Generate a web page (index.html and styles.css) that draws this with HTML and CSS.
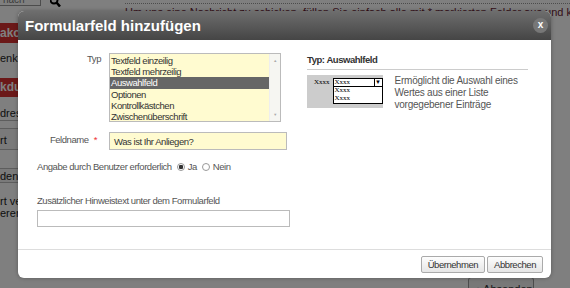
FILE: index.html
```html
<!DOCTYPE html>
<html lang="de">
<head>
    <meta charset="UTF-8">
    <title>Formularfeld hinzufügen</title>
    <link rel="stylesheet" href="styles.css">
</head>
<body>
    <!-- page behind the dialog -->
    <div class="page">
        <div class="page-top">
            <div class="search">
                <div class="search-input">nach</div>
                <svg class="search-icon" width="12" height="7" viewBox="0 0 12 7"><circle cx="4" cy="0" r="3.5" fill="none" stroke="#000" stroke-width="2"/><path d="M6.5 2.5 L10 6.5" stroke="#000" stroke-width="2.5"/></svg>
            </div>
            <div class="intro">Um uns eine Nachricht zu schicken, füllen Sie einfach alle mit * markierten Felder aus und klicken Sie auf "Abschicken"</div>
        </div>
        <div class="sidebar">
            <div class="side-head">akor</div>
            <div class="side-text">enkor</div>
            <div class="side-head side-head-2">kdun</div>
            <div class="side-text side-line">dres</div>
            <div class="side-box">rt</div>
            <div class="side-box side-box-2">den</div>
            <div class="side-note">rt ver<br>eren</div>
        </div>
        <div class="page-btn">› Absenden</div>
    </div>

    <div class="overlay"></div>

    <div class="dialog">
        <div class="dialog-title">
            <span>Formularfeld hinzufügen</span>
            <span class="close">x</span>
        </div>
        <div class="dialog-body">
            <div class="form">
                <div class="row">
                    <label class="label">Typ</label>
                    <div class="listbox">
                        <div class="list-items">
                            <div class="item">Textfeld einzeilig</div>
                            <div class="item">Textfeld mehrzeilig</div>
                            <div class="item selected">Auswahlfeld</div>
                            <div class="item">Optionen</div>
                            <div class="item">Kontrollkästchen</div>
                            <div class="item">Zwischenüberschrift</div>
                        </div>
                        <div class="scrollbar">
                            <span class="arrow">▲</span>
                            <span class="arrow">▼</span>
                        </div>
                    </div>
                </div>
                <div class="row row-name">
                    <label class="label">Feldname <span class="req">*</span></label>
                    <div class="text-input yellow">Was ist Ihr Anliegen?</div>
                </div>
                <div class="required-row">
                    Angabe durch Benutzer erforderlich
                    <span class="radio checked"></span> Ja
                    <span class="radio"></span> Nein
                </div>
                <div class="hint">
                    <div class="hint-label">Zusätzlicher Hinweistext unter dem Formularfeld</div>
                    <div class="text-input wide"></div>
                </div>
            </div>

            <div class="info">
                <h4 class="info-title">Typ: Auswahlfeld</h4>
                <div class="info-row">
                    <div class="preview">
                        <span class="preview-label">Xxxx</span>
                        <div class="preview-select">
                            <div class="preview-current">Xxxx<span class="preview-arrow">▼</span></div>
                            <div class="preview-option">Xxxx</div>
                            <div class="preview-option">Xxxx</div>
                        </div>
                    </div>
                    <p class="info-text">Ermöglicht die Auswahl eines Wertes aus einer Liste vorgegebener Einträge</p>
                </div>
            </div>
        </div>
        <div class="dialog-footer">
            <button class="btn">Übernehmen</button>
            <button class="btn">Abbrechen</button>
        </div>
    </div>
</body>
</html>
```

FILE: styles.css
```css
* {
    margin: 0;
    padding: 0;
    box-sizing: border-box;
}

body {
    font-family: "Liberation Sans", Arial, sans-serif;
    width: 570px;
    height: 288px;
    overflow: hidden;
    position: relative;
    background: #fff;
    color: #333;
}

/* page behind */
.page {
    width: 570px;
    height: 288px;
    overflow: hidden;
}

.page-top {
    display: flex;
    height: 20px;
}

.search {
    width: 125px;
    display: flex;
    align-items: flex-start;
}

.search-input {
    width: 41px;
    height: 6px;
    border: 1px solid #999;
    border-top: none;
    border-left: none;
    font-size: 10px;
    line-height: 0;
    color: #777;
    padding-left: 3px;
    overflow: hidden;
}

.search-icon {
    margin-left: 9px;
}

.intro {
    flex: 1;
    white-space: nowrap;
    overflow: hidden;
    border-top: 1px dotted #999;
    margin-top: 3px;
    padding-top: 2px;
    font-size: 11px;
    color: #6a1b32;
}

.sidebar {
    width: 56px;
    font-size: 11px;
    margin-top: 3px;
}

.side-head {
    background: #d63030;
    color: #fff;
    font-weight: bold;
    font-size: 12px;
    height: 20px;
    line-height: 20px;
}

.side-head-2 {
    height: 19px;
    line-height: 19px;
}

.side-text {
    height: 35px;
    line-height: 30px;
    color: #222;
}

.side-line {
    height: 24px;
    line-height: 32px;
    border-bottom: 1px solid #bbb;
    overflow: hidden;
}

.side-box {
    margin-top: 7px;
    height: 22px;
    line-height: 22px;
    border: 1px solid #bbb;
    border-left: none;
    background: #f4f4f4;
    color: #222;
}

.side-box-2 {
    margin-top: 18px;
    height: 15px;
    line-height: 14px;
}

.side-note {
    margin-top: 12px;
    line-height: 12px;
    color: #222;
}

.page-btn {
    position: absolute;
    left: 468px;
    top: 277px;
    width: 66px;
    height: 20px;
    border: 1px solid #999;
    border-radius: 3px;
    background: #f0f0f0;
    font-size: 11px;
    padding: 5px 0 0 8px;
}

.overlay {
    position: absolute;
    inset: 0;
    background: rgba(0, 0, 0, 0.5);
}

/* dialog */
.dialog {
    position: absolute;
    left: 18px;
    top: 11px;
    width: 533px;
    height: 267px;
    background: #fff;
    border-radius: 6px;
    overflow: hidden;
    box-shadow: 0 0 4px rgba(0, 0, 0, 0.3);
    display: flex;
    flex-direction: column;
}

.dialog-title {
    height: 29px;
    background: linear-gradient(#6e6e6e, #454545);
    color: #fff;
    font-weight: bold;
    font-size: 15px;
    display: flex;
    align-items: center;
    justify-content: space-between;
    padding: 0 3px 0 7px;
}

.close {
    width: 15px;
    height: 15px;
    border-radius: 50%;
    background: #777;
    font-size: 10px;
    line-height: 14px;
    text-align: center;
}

.dialog-body {
    flex: 1;
    display: flex;
    padding: 13px 0 0 19px;
    border-bottom: 1px solid #ddd;
}

.form {
    width: 253px;
    font-size: 9.5px;
    letter-spacing: -0.45px;
    color: #555;
}

.row {
    display: flex;
}

.label {
    width: 72px;
    padding: 0 8px 0 0;
    text-align: right;
    color: #555;
}

.req {
    color: #e33;
    margin-left: 3px;
}

.listbox {
    width: 172px;
    height: 69px;
    border: 1px solid #bbb;
    background: #fffbd0;
    display: flex;
}

.list-items {
    flex: 1;
    padding-top: 1px;
}

.item {
    height: 11.2px;
    line-height: 11px;
    padding-left: 1px;
    color: #333;
}

.item.selected {
    background: #666;
    color: #fff;
}

.scrollbar {
    width: 11px;
    display: flex;
    flex-direction: column;
    justify-content: space-between;
    background: #f6f6f2;
    border-left: 1px solid #eee;
}

.arrow {
    font-size: 4px;
    color: #aaa;
    text-align: center;
    padding: 4px 0;
}

.row-name {
    margin-top: 10px;
}

.row-name .label {
    padding-top: 2px;
    padding-right: 12px;
}

.text-input {
    height: 18px;
    border: 1px solid #bbb;
    background: #fff;
    color: #333;
    padding: 3px 4px;
    line-height: 11px;
}

.text-input.yellow {
    width: 178px;
    background: #fffbd0;
}

.text-input.wide {
    width: 253px;
    height: 17px;
}

.required-row {
    margin-top: 11px;
    display: flex;
    align-items: center;
    gap: 3px;
    line-height: 12px;
}

.radio {
    width: 8px;
    height: 8px;
    border-radius: 50%;
    border: 1px solid #999;
    background: #fff;
    margin-left: 2px;
}

.radio.checked {
    background: radial-gradient(#333 0 2px, #fff 2.5px);
}

.hint {
    margin-top: 22px;
}

.hint-label {
    margin-bottom: 3px;
    line-height: 12px;
}

/* info panel */
.info {
    margin-left: 17px;
    width: 221px;
    font-size: 10px;
    padding-top: 1px;
}

.info-title {
    font-size: 9.5px;
    letter-spacing: -0.45px;
    color: #333;
    padding-bottom: 4px;
    border-bottom: 1px solid #ccc;
}

.info-row {
    display: flex;
    margin-top: 5px;
}

.preview {
    width: 86px;
    height: 33px;
    background: #ccc;
    display: flex;
    padding: 3px 0 0 7px;
    font-family: "Liberation Serif", serif;
    font-size: 7px;
    color: #000;
}

.preview-label {
    margin-right: 3px;
    line-height: 9px;
}

.preview-select {
    width: 50px;
    height: 26px;
    border: 1px solid #000;
    background: #fff;
}

.preview-current {
    height: 8px;
    line-height: 7px;
    border-bottom: 1px solid #000;
    padding-left: 1px;
    position: relative;
}

.preview-arrow {
    position: absolute;
    right: 0;
    top: 0;
    width: 8px;
    height: 7px;
    border-left: 1px solid #000;
    font-size: 6px;
    text-align: center;
}

.preview-option {
    line-height: 7.5px;
    padding-left: 1px;
}

.info-text {
    margin-left: 12px;
    font-size: 10px;
    letter-spacing: -0.25px;
    line-height: 12px;
    color: #555;
}

.dialog-footer {
    height: 28px;
    display: flex;
    justify-content: flex-end;
    align-items: flex-start;
    gap: 2px;
    padding: 6px 8px 0 0;
}

.btn {
    font-family: "Liberation Sans", Arial, sans-serif;
    font-size: 9.5px;
    letter-spacing: -0.45px;
    color: #333;
    height: 17px;
    padding: 0 6px;
    border: 1px solid #aaa;
    border-radius: 2px;
    background: linear-gradient(#fdfdfd, #e6e6e6);
}
```
